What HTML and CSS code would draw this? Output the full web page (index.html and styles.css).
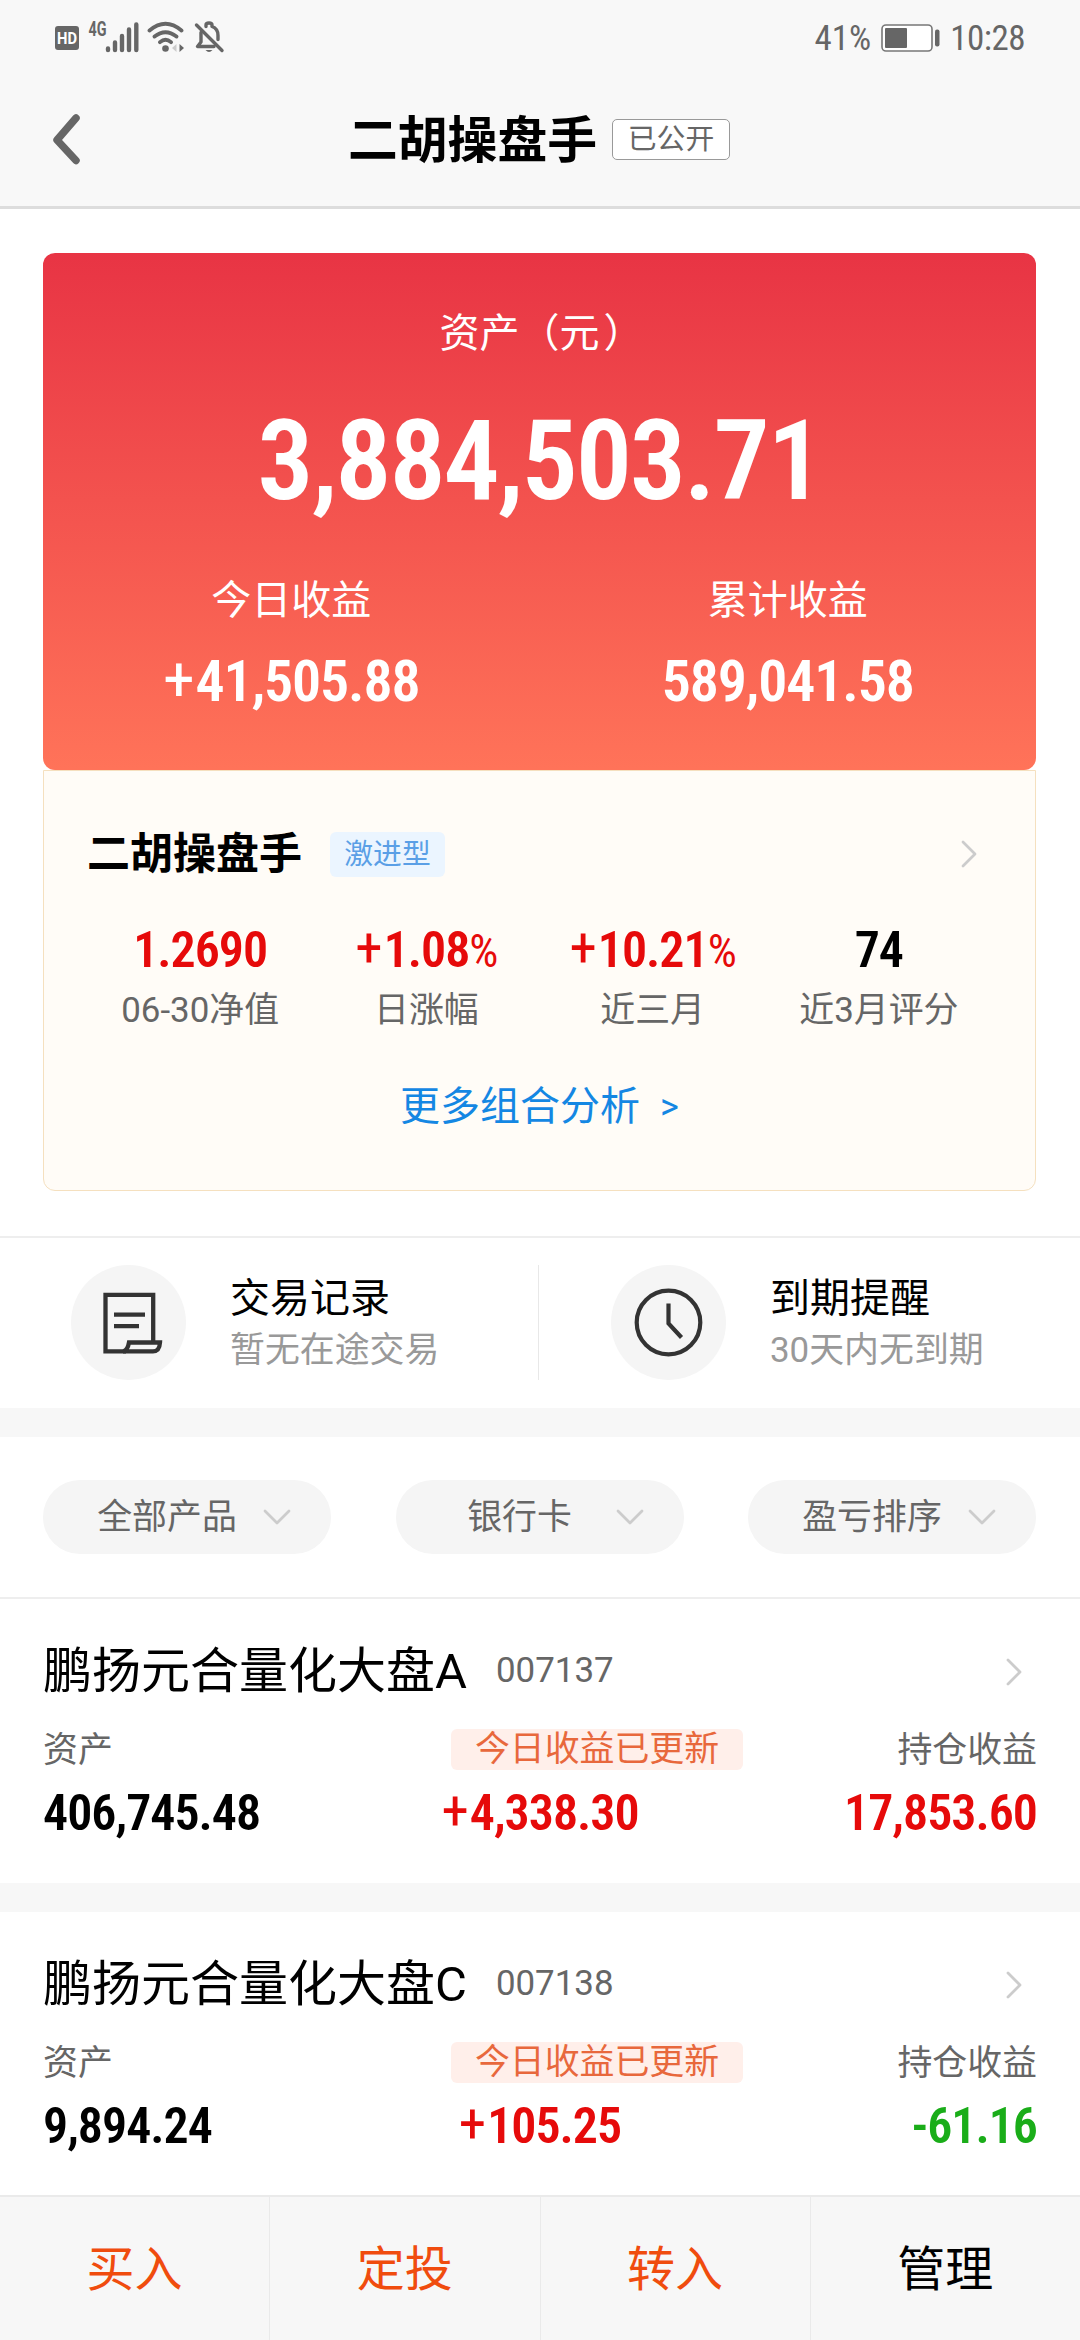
FILE: index.html
```html
<!DOCTYPE html>
<html lang="zh-CN">
<head>
<meta charset="utf-8">
<title>二胡操盘手</title>
<link rel="stylesheet" href="styles.css">
</head>
<body>
<header class="top">
  <div class="status">
    <svg class="status-icons" width="180" height="40" viewBox="50 16 180 40">
      <rect x="55" y="26" width="24" height="24" rx="3" fill="#666"/>
      <text x="67" y="43.500" class="hd" text-anchor="middle" textLength="20" lengthAdjust="spacingAndGlyphs">HD</text>
      <text x="88.500" y="36" class="net" textLength="18" lengthAdjust="spacingAndGlyphs">4G</text>
      <g stroke="#666" stroke-width="4.400" stroke-linecap="round">
        <path d="M108 48.500v1.500M115 42.500v7.500M122 36v14M129 29.500v20.500M136.300 24.500v25.500"/>
      </g>
      <g fill="none" stroke="#666" stroke-width="3.800" stroke-linecap="round">
        <path d="M149.500 30.500q16-13.500 32 0M154.500 36.500q11-8.500 22 0M160 42.200q5.500-5 11 0"/>
      </g>
      <circle cx="165.500" cy="48.500" r="3.300" fill="#666"/>
      <path d="M176.500 44v8l-4.500-4z" fill="#ccc"/>
      <path d="M179.500 44v8l4.500-4z" fill="#666"/>
      <g fill="none" stroke="#666" stroke-width="3.400" stroke-linecap="round" stroke-linejoin="round">
        <path d="M196.500 25L222 50.500"/>
        <path d="M201 32.500v9.500l-3.500 4.500h16.500M206 26.500v-1.500q0-2 3-2t3 2v1.500q6 2 6 9v4"/>
      </g>
      <path d="M205.500 50h7q-3.500 4-7 0z" fill="#666"/>
    </svg>
    <div class="status-right">
      <span class="pct">41%</span>
      <svg width="59" height="30" viewBox="0 0 59 30">
        <rect x="1" y="2" width="50" height="26" rx="4" fill="#fff" stroke="#777" stroke-width="1.600"/>
        <rect x="4" y="5" width="22" height="20" rx="1" fill="#666"/>
        <rect x="54" y="6.500" width="4.500" height="17" rx="2" fill="#666"/>
      </svg>
      <span class="clock">10:28</span>
    </div>
  </div>
  <nav class="nav">
    <svg class="back" width="30" height="52" viewBox="0 0 30 52"><path d="M24 5L5 27l19 20.500" fill="none" stroke="#666" stroke-width="7.500" stroke-linecap="round" stroke-linejoin="round"/></svg>
    <h1 class="title">二胡操盘手</h1>
    <span class="open-tag">已公开</span>
  </nav>
</header>

<section class="account">
  <div class="asset">
    <div class="asset-label">资产（元<span class="paren">）</span></div>
    <div class="asset-total"><span class="num num-xl">3,884,503.71</span></div>
    <div class="asset-cols">
      <div class="asset-col"><div class="asset-label">今日收益</div><div class="asset-value"><span class="num num-l"><span class="sign">+</span>41,505.88</span></div></div>
      <div class="asset-col"><div class="asset-label">累计收益</div><div class="asset-value"><span class="num num-l">589,041.58</span></div></div>
    </div>
  </div>
  <div class="combo">
    <div class="combo-head">
      <h2 class="combo-name">二胡操盘手</h2>
      <span class="risk">激进型</span>
      <svg class="chev" width="18" height="30" viewBox="0 0 18 30"><path d="M3 3l12 12L3 27"/></svg>
    </div>
    <div class="stats">
      <div class="stat"><div class="stat-value red"><span class="num">1.2690</span></div><div class="label">06-30净值</div></div>
      <div class="stat"><div class="stat-value red"><span class="num"><span class="sign">+</span>1.08<span class="percent">%</span></span></div><div class="label">日涨幅</div></div>
      <div class="stat"><div class="stat-value red"><span class="num"><span class="sign">+</span>10.21<span class="percent">%</span></span></div><div class="label">近三月</div></div>
      <div class="stat"><div class="stat-value"><span class="num">74</span></div><div class="label">近3月评分</div></div>
    </div>
    <a class="more">更多组合分析<span class="gt">&gt;</span></a>
  </div>
</section>

<section class="shortcuts">
  <div class="shortcut">
    <span class="disc"><svg width="115" height="115" viewBox="0 0 115 115" fill="none" stroke="#333" stroke-width="4.300">
      <path d="M82.200 77V29.800H34.500V86.400H55"/><path d="M43 49.700h31M43 61.200h25"/><path d="M58 77.500h31q-.5 8.900-7 8.900H52q4.500-.5 6-8.900z"/>
    </svg></span>
    <div><div class="shortcut-title">交易记录</div><div class="shortcut-sub">暂无在途交易</div></div>
  </div>
  <div class="shortcut second">
    <span class="disc"><svg width="115" height="115" viewBox="0 0 115 115" fill="none" stroke="#333" stroke-width="4.200">
      <circle cx="57.500" cy="57.500" r="31.800"/><path d="M57.500 38.500v20l13 14"/>
    </svg></span>
    <div><div class="shortcut-title">到期提醒</div><div class="shortcut-sub">30天内无到期</div></div>
  </div>
</section>

<section class="filters">
  <div class="pill"><span class="pill-text">全部产品</span><svg width="28" height="18" viewBox="0 0 28 18"><path d="M2 3l12 12L26 3"/></svg></div>
  <div class="pill"><span class="pill-text">银行卡</span><svg width="28" height="18" viewBox="0 0 28 18"><path d="M2 3l12 12L26 3"/></svg></div>
  <div class="pill"><span class="pill-text">盈亏排序</span><svg width="28" height="18" viewBox="0 0 28 18"><path d="M2 3l12 12L26 3"/></svg></div>
</section>

<main class="funds">
  <article class="fund">
    <div class="fund-head"><h3 class="fund-name">鹏扬元合量化大盘A</h3><span class="fund-code">007137</span>
      <svg class="chev" width="18" height="30" viewBox="0 0 18 30"><path d="M3 3l12 12L3 27"/></svg></div>
    <div class="fund-labels"><span class="label">资产</span><span class="updated">今日收益已更新</span><span class="label end">持仓收益</span></div>
    <div class="fund-values"><span class="num left">406,745.48</span><span class="num red mid"><span class="sign">+</span>4,338.30</span><span class="num red right">17,853.60</span></div>
  </article>
  <article class="fund">
    <div class="fund-head"><h3 class="fund-name">鹏扬元合量化大盘C</h3><span class="fund-code">007138</span>
      <svg class="chev" width="18" height="30" viewBox="0 0 18 30"><path d="M3 3l12 12L3 27"/></svg></div>
    <div class="fund-labels"><span class="label">资产</span><span class="updated">今日收益已更新</span><span class="label end">持仓收益</span></div>
    <div class="fund-values"><span class="num left">9,894.24</span><span class="num red mid"><span class="sign">+</span>105.25</span><span class="num green right">-61.16</span></div>
  </article>
</main>

<footer class="actions">
  <span class="action">买入</span><span class="action">定投</span><span class="action">转入</span><span class="action manage">管理</span>
</footer>
</body>
</html>
```
FILE: styles.css
```css
* { box-sizing: border-box; }
html, body { margin: 0; padding: 0; }
body {
  width: 1080px; height: 2340px; overflow: hidden;
  display: flex; flex-direction: column;
  background: #fff; color: #000;
  font-family: Roboto, "Noto Sans CJK SC", sans-serif;
}
h1, h2, h3 { margin: 0; }
svg { display: block; flex: none; }

.top { height: 209px; flex: none; background: #f8f8f8; border-bottom: 3px solid #ddd; }
.status { height: 72px; display: flex; justify-content: space-between; padding: 16px 55px 0 50px; }
.status-right { display: flex; align-items: center; height: 44px; gap: 10px; font-size: 35px; color: #666; font-stretch: 75%; }
.clock { letter-spacing: -0.5px; }
.hd { font: 700 17px Roboto, sans-serif; fill: #fff; }
.net { font: 700 21px Roboto, sans-serif; fill: #666; }
.nav { height: 134px; display: flex; align-items: center; padding: 0 0 0 52px; }
.title { margin-left: 266px; padding-top: 3px; font-size: 49.800px; line-height: 60px; font-weight: 700; }
.open-tag {
  margin-left: 15px; width: 118px; height: 41px; border: 1.500px solid #999; border-radius: 5px;
  background: #fff; color: #666; font-size: 28.800px; line-height: 38px; text-align: center;
}

.account { padding: 44px 44px 0 43px; height: 1027px; flex: none; }
.asset {
  height: 517px; padding-top: 51px; border-radius: 12px; color: #fff; text-align: center;
  background: linear-gradient(#e83444, #ff7359);
}
.asset-label { font-size: 40px; line-height: 60px; }
.paren { position: relative; left: 4px; }
.asset-total { height: 150px; line-height: 150px; margin-top: 22px; }
.asset-cols { display: flex; margin-top: 35px; }
.asset-col { flex: 1; }
.asset-value { height: 70px; line-height: 70px; margin-top: 15px; }
.num { display: inline-block; font-weight: 600; font-size: 50px; font-stretch: 75%; letter-spacing: -0.02em; white-space: nowrap; }
.num-xl { font-size: 112px; }
.num-l { font-size: 58px; }
.sign { font-weight: 400; font-size: 1.1em; line-height: 0; margin-right: 2px; }
.percent { font-weight: 400; font-size: 0.92em; line-height: 0; }
.red { color: #e60a0a; }
.green { color: #1aad19; }

.combo { height: 421px; padding: 53px 43px 0 43px; background: #fffcf7; border: 1.500px solid #f5e0bf; border-radius: 0 0 12px 12px; }
.combo-head { display: flex; align-items: center; height: 60px; }
.combo-name { font-size: 43px; line-height: 60px; font-weight: 700; }
.risk { margin-left: 28px; width: 115px; height: 45px; border-radius: 6px; background: #ebf5ff; color: #5a9fe6; font-size: 28.800px; line-height: 44px; text-align: center; }
.chev { margin-left: auto; }
.chev path, .pill path { fill: none; stroke: #ccc; stroke-width: 2.800; stroke-linecap: round; stroke-linejoin: round; }
.combo-head .chev { margin-right: 14px; }
.stats { display: flex; margin-top: 36px; }
.stat { flex: 1; text-align: center; }
.stat-value { height: 60px; line-height: 60px; }
.label { font-size: 34.900px; line-height: 50px; color: #666; }
.stat .label { margin-top: 6px; }
.more { display: flex; justify-content: center; align-items: center; margin-top: 41px; font-size: 40px; line-height: 60px; color: #1487e3; }
.gt { margin-left: 20px; font-size: 36px; }

.shortcuts { height: 201px; flex: none; display: flex; border-top: 2px solid #eee; border-bottom: 29px solid #f7f7f7; padding-top: 27px; }
.shortcut { width: 539px; height: 115px; padding-left: 71px; display: flex; align-items: center; border-right: 1px solid #e8e8e8; }
.shortcut.second { border-right: 0; padding-left: 72px; }
.disc { width: 115px; height: 115px; border-radius: 50%; background: #f5f5f5; margin-right: 44px; }
.shortcut-title { font-size: 40px; line-height: 54px; padding-top: 2px; }
.shortcut-sub { font-size: 34.900px; line-height: 50px; color: #999; }

.filters { height: 162px; flex: none; display: flex; justify-content: space-between; padding: 43px 44px 0 43px; border-bottom: 2px solid #eee; }
.pill { width: 288px; height: 74px; border-radius: 37px; background: #f5f5f5; display: flex; align-items: center; }
.pill-text { width: 248px; padding-top: 2px; text-align: center; color: #666; font-size: 34.900px; line-height: 70px; }
.pill svg { margin-left: -28px; }

.fund { height: 313px; padding: 43px 43px 0; border-bottom: 29px solid #f7f7f7; }
.fund:last-child { height: 283px; border-bottom: 0; }
.fund-head { display: flex; align-items: center; height: 60px; }
.fund-name { font-size: 49px; line-height: 60px; font-weight: 400; }
.fund-code { margin-left: 29px; padding-bottom: 3px; font-size: 34.900px; color: #666; }
.fund-head .chev { margin-right: 14px; }
.fund-labels { display: grid; grid-template-columns: 1fr 292px 1fr; align-items: center; margin-top: 21px; height: 50px; }
.fund-labels .updated { position: relative; left: 57px; }
.updated { width: 292px; height: 41px; border-radius: 6px; background: #ffefea; color: #e8683c; font-size: 34.900px; line-height: 42px; text-align: center; }
.end { text-align: right; }
.fund-labels .label { padding-top: 3px; }
.fund-values { display: grid; grid-template-columns: 1fr 1fr 1fr; margin-top: 10px; height: 60px; line-height: 60px; }
.mid { text-align: center; }
.right { text-align: right; }

.actions { height: 145px; flex: none; display: flex; background: #f7f7f7; border-top: 2px solid #eaeaea; }
.action { flex: 1; text-align: center; font-size: 48px; line-height: 145px; color: #f04c0e; border-right: 1px solid #eaeaea; }
.manage { color: #000; border-right: 0; }
```
